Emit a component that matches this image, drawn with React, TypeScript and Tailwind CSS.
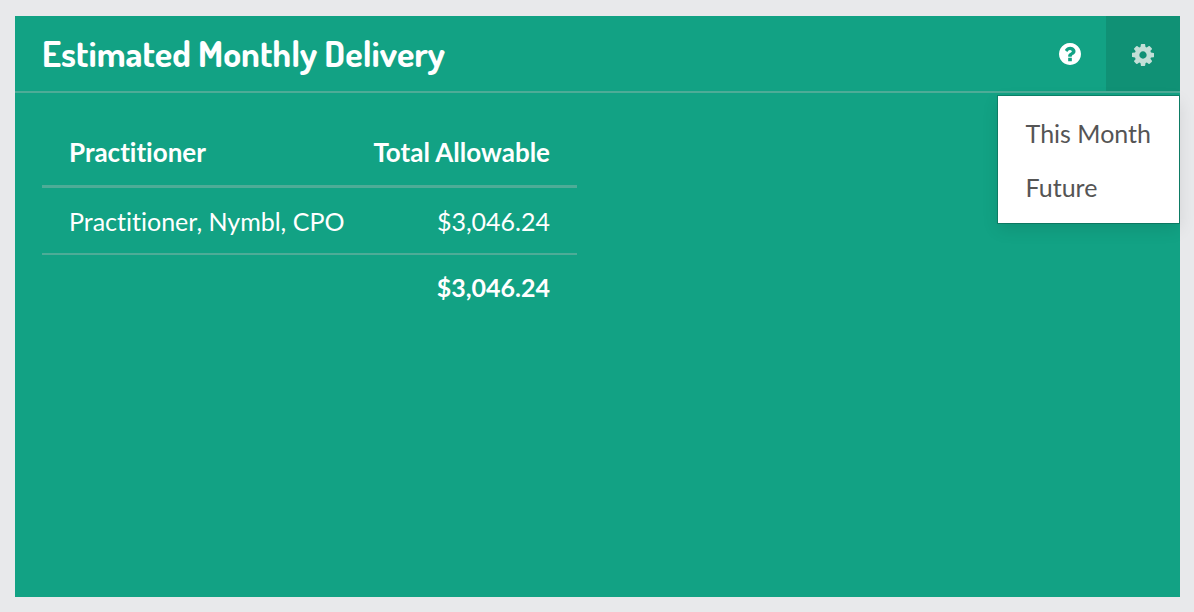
import React, { useState } from 'react';

const rows = [{ practitioner: 'Practitioner, Nymbl, CPO', total: '$3,046.24' }];

const periods = ['This Month', 'Future'];

function HelpIcon() {
  return (
    <svg viewBox="128 128 1536 1536" className="size-[22px] fill-white" aria-hidden="true">
      <path d="M1024 1376v-192q0-14-9-23t-23-9h-192q-14 0-23 9t-9 23v192q0 14 9 23t23 9h192q14 0 23-9t9-23zm256-672q0-88-55.5-163t-138.5-116-170-41q-243 0-371 213-15 24 8 42l132 100q7 6 19 6 16 0 25-12 53-68 86-92 34-24 86-24 48 0 85.5 26t37.5 59q0 38-20 61t-68 45q-63 28-115.5 86.5t-52.5 125.5v36q0 14 9 23t23 9h192q14 0 23-9t9-23q0-19 21.5-49.5t54.5-49.5q32-18 49-28.5t46-35 44.5-48 28-60.5 12.5-81zm384 192q0 209-103 385.5t-279.5 279.5-385.5 103-385.5-103-279.5-279.5-103-385.5 103-385.5 279.5-279.5 385.5-103 385.5 103 279.5 279.5 103 385.5z" />
    </svg>
  );
}

function CogIcon() {
  return (
    <svg viewBox="0 128 1536 1536" className="size-[22px] fill-[#c3dfd7]" aria-hidden="true">
      <path d="M1024 896q0-106-75-181t-181-75-181 75-75 181 75 181 181 75 181-75 75-181zm512-109v222q0 12-8 23t-20 13l-185 28q-19 54-39 91 35 50 107 138 10 12 10 25t-9 23q-27 37-99 108t-94 71q-12 0-26-9l-138-108q-44 23-91 38-16 136-29 186-7 28-36 28h-222q-14 0-24.5-8.5t-11.5-21.5l-28-184q-49-16-90-37l-141 107q-10 9-25 9-14 0-25-11-126-114-165-168-7-10-7-23 0-12 8-23 15-21 51-66.5t54-70.5q-27-50-41-99l-183-27q-13-2-21-12.5t-8-23.5v-222q0-12 8-23t19-13l186-28q14-46 39-92-40-57-107-138-10-12-10-24 0-10 9-23 26-36 98.5-107.5t94.5-71.5q13 0 26 10l138 107q44-23 91-38 16-136 29-186 7-28 36-28h222q14 0 24.5 8.5t11.5 21.5l28 184q49 16 90 37l142-107q9-9 24-9 13 0 25 10 129 119 165 170 7 8 7 22 0 12-8 23-15 21-51 66.5t-54 70.5q26 50 41 98l183 28q13 2 21 12.5t8 23.5z" />
    </svg>
  );
}

function SettingsMenu() {
  const [open, setOpen] = useState(true);

  return (
    <div className="relative flex">
      <button
        type="button"
        aria-label="Settings"
        aria-expanded={open}
        onClick={() => setOpen(!open)}
        className="flex w-[74px] items-center justify-center bg-[#109175] pt-0.5"
      >
        <CogIcon />
      </button>
      {open && (
        <ul className="absolute top-full right-px z-10 mt-[5px] bg-white pt-3 pb-2.5 shadow-[0_0_0_1px_rgba(0,0,0,0.2),0_6px_16px_rgba(0,0,0,0.1)]">
          {periods.map((period) => (
            <li key={period} className="mb-[3px] last:mb-0">
              <button
                type="button"
                onClick={() => setOpen(false)}
                className="block w-full px-7 py-2 text-left text-[25px] leading-[35px] whitespace-nowrap text-[#555]"
              >
                {period}
              </button>
            </li>
          ))}
        </ul>
      )}
    </div>
  );
}

function DeliveryTable() {
  return (
    <table className="w-[46%] min-w-[535px] border-collapse text-[25px] leading-[35px] whitespace-nowrap text-white [font-variant-ligatures:none]">
      <thead>
        <tr className="border-b-3 border-[#4dac97] text-[26px]">
          <th className="pt-[15px] pb-[15px] pl-[27px] text-left font-bold">Practitioner</th>
          <th className="pt-[15px] pr-[27px] pb-[15px] text-right font-bold">Total Allowable</th>
        </tr>
      </thead>
      <tbody>
        {rows.map((row) => (
          <tr key={row.practitioner} className="border-b-2 border-[#4dac97]">
            <td className="pt-4 pb-3.5 pl-[27px]">{row.practitioner}</td>
            <td className="pt-4 pr-[27px] pb-3.5 text-right">{row.total}</td>
          </tr>
        ))}
      </tbody>
      <tfoot>
        <tr>
          <td />
          <td className="py-[15px] pr-[27px] text-right font-bold">$3,046.24</td>
        </tr>
      </tfoot>
    </table>
  );
}

export default function App() {
  return (
    <main className="flex min-h-screen flex-col bg-[#e8e9eb] pt-4 pr-3.5 pb-[15px] pl-[15px] font-['Lato',sans-serif]">
      <section className="flex flex-1 flex-col bg-[#12a284]">
        <header className="flex border-b-2 border-[#4dac97]">
          <h1 className="flex-1 py-[15px] pl-[27px] font-['Dosis','Lato',sans-serif] text-[36px] leading-[45px] font-bold text-white">
            Estimated Monthly Delivery
          </h1>
          <button type="button" aria-label="Help" className="flex w-[72px] items-center justify-center">
            <HelpIcon />
          </button>
          <SettingsMenu />
        </header>
        <div className="px-[27px] pt-[27px]">
          <DeliveryTable />
        </div>
      </section>
    </main>
  );
}
